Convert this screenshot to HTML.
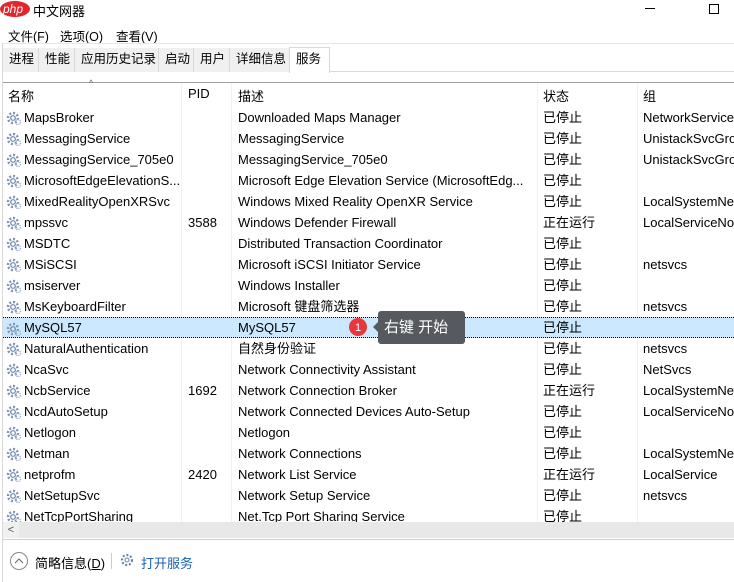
<!DOCTYPE html>
<html><head><meta charset="utf-8"><style>
*{margin:0;padding:0;box-sizing:border-box}
body{width:734px;height:582px;overflow:hidden;background:#fff;font-family:"Liberation Sans","Noto Sans CJK SC",sans-serif;font-size:13px;color:#000;position:relative}
.a{position:absolute;white-space:nowrap}
.tab{position:absolute;top:48px;height:24px;background:#f0f0f0;border-right:1px solid #d9d9d9;line-height:23px;padding-left:6px;font-size:12.5px}
.row{position:absolute;left:3px;width:731px;height:21px;line-height:21px}
.row span{position:absolute;top:0}
.g{left:3px;top:3px;position:absolute}
.vl{position:absolute;top:83px;height:439px;width:1px;background:#eef1f8}
</style></head><body>
<svg class="a" style="left:0;top:0" width="32" height="20"><ellipse cx="15" cy="9" rx="15" ry="8" fill="#e3262b"/><text x="3" y="13" font-size="12" fill="#fff" font-style="italic" font-family="Liberation Sans">php</text></svg>
<div class="a" style="left:33px;top:1px;font-size:13px">中文网器</div>
<div class="a" style="left:645px;top:8px;width:10px;height:1px;background:#000"></div>
<div class="a" style="left:709px;top:4px;width:10px;height:10px;border:1px solid #000"></div>
<div class="a" style="left:8px;top:26px;font-size:12.5px">文件(F)</div>
<div class="a" style="left:60px;top:26px;font-size:12.5px">选项(O)</div>
<div class="a" style="left:116px;top:26px;font-size:12.5px">查看(V)</div>
<div class="a" style="left:2px;top:43px;width:732px;height:1px;background:#e6e6e6"></div>
<div class="a" style="left:2px;top:71px;width:732px;height:1px;background:#d9d9d9"></div>
<div class="a" style="left:2px;top:43px;width:1px;height:539px;background:#d9d9d9"></div>
<div class="tab" style="left:3px;width:36px">进程</div>
<div class="tab" style="left:39px;width:36px">性能</div>
<div class="tab" style="left:75px;width:84px">应用历史记录</div>
<div class="tab" style="left:159px;width:35px">启动</div>
<div class="tab" style="left:194px;width:36px">用户</div>
<div class="tab" style="left:230px;width:60px">详细信息</div>
<div class="tab" style="left:289px;top:47px;height:26px;width:41px;background:#fff;border:1px solid #d9d9d9;border-bottom:none">服务</div>
<div class="a" style="left:3px;top:82px;width:731px;height:1px;background:#a0a0a0"></div>
<div class="a" style="left:89px;top:78px;font-size:9px;color:#666">^</div>
<div class="vl" style="left:181px"></div><div class="vl" style="left:231px"></div><div class="vl" style="left:537px"></div><div class="vl" style="left:637px"></div>
<div class="a" style="left:8px;top:86px">名称</div>
<div class="a" style="left:188px;top:86px">PID</div>
<div class="a" style="left:238px;top:86px">描述</div>
<div class="a" style="left:543px;top:86px">状态</div>
<div class="a" style="left:643px;top:86px">组</div>
<div id="rows"></div>
<div class="a" style="left:3px;top:522px;width:731px;height:16px;background:#e8e8e8"></div>
<div class="a" style="left:3px;top:522px;width:16px;height:16px;background:#f0f0f0;font-size:11px;line-height:16px;text-align:center;color:#555">&lt;</div>
<div class="a" style="left:3px;top:539px;width:731px;height:1px;background:#d0d0d0"></div>
<svg class="a" style="left:9px;top:551px" width="20" height="20"><circle cx="10" cy="10" r="8.5" fill="none" stroke="#888"/><path d="M6 12 L10 8 L14 12" fill="none" stroke="#666"/></svg>
<div class="a" style="left:35px;top:553px">简略信息(<u>D</u>)</div>
<div class="a" style="left:111px;top:553px;width:1px;height:16px;background:#ccc"></div>
<svg class="a" style="left:120px;top:553px" width="16" height="16"><g fill="none" stroke="#6a84a8" stroke-width="2.2" stroke-dasharray="2 1.8"><circle cx="7" cy="7" r="5"/></g><circle cx="7" cy="7" r="2" fill="none" stroke="#6a84a8"/></svg>
<div class="a" style="left:141px;top:553px;color:#1a5fb4">打开服务</div>
<script>
const d=[["MapsBroker","","Downloaded Maps Manager","已停止","NetworkService"],["MessagingService","","MessagingService","已停止","UnistackSvcGrou"],["MessagingService_705e0","","MessagingService_705e0","已停止","UnistackSvcGrou"],["MicrosoftEdgeElevationS...","","Microsoft Edge Elevation Service (MicrosoftEdg...","已停止",""],["MixedRealityOpenXRSvc","","Windows Mixed Reality OpenXR Service","已停止","LocalSystemNet"],["mpssvc","3588","Windows Defender Firewall","正在运行","LocalServiceNo"],["MSDTC","","Distributed Transaction Coordinator","已停止",""],["MSiSCSI","","Microsoft iSCSI Initiator Service","已停止","netsvcs"],["msiserver","","Windows Installer","已停止",""],["MsKeyboardFilter","","Microsoft 键盘筛选器","已停止","netsvcs"],["MySQL57","","MySQL57","已停止",""],["NaturalAuthentication","","自然身份验证","已停止","netsvcs"],["NcaSvc","","Network Connectivity Assistant","已停止","NetSvcs"],["NcbService","1692","Network Connection Broker","正在运行","LocalSystemNet"],["NcdAutoSetup","","Network Connected Devices Auto-Setup","已停止","LocalServiceNo"],["Netlogon","","Netlogon","已停止",""],["Netman","","Network Connections","已停止","LocalSystemNet"],["netprofm","2420","Network List Service","正在运行","LocalService"],["NetSetupSvc","","Network Setup Service","已停止","netsvcs"],["NetTcpPortSharing","","Net.Tcp Port Sharing Service","已停止",""]];
const gear='<svg class="g" width="16" height="16"><circle cx="7" cy="8" r="5" fill="none" stroke="#7d94b3" stroke-width="2.4" stroke-dasharray="2 1.9"/><circle cx="7" cy="8" r="2.3" fill="none" stroke="#6a84a8" stroke-width="1.2"/><circle cx="12" cy="12" r="2.5" fill="none" stroke="#9aaac0" stroke-width="1.3" stroke-dasharray="1.2 1"/></svg>';
let h='';d.forEach((r,i)=>{const t=107+i*21;const sel=i==10;
h+=`<div class="row" style="top:${t}px;${sel?'background:#cce8ff;border-top:1px dotted #000;border-bottom:1px dotted #000;line-height:20px':'line-height:22px'}">${gear}<span style="left:21px">${r[0]}</span><span style="left:185px">${r[1]}</span><span style="left:235px">${r[2]}</span><span style="left:540px">${r[3]}</span><span style="left:640px">${r[4]}</span></div>`;});
document.getElementById('rows').innerHTML=h;
</script>
<svg class="a" style="left:347px;top:317px" width="30" height="20"><circle cx="11" cy="10" r="9" fill="#e8383d"/><text x="11" y="14" text-anchor="middle" fill="#fff" font-size="11" font-family="Liberation Sans">1</text></svg>
<div class="a" style="left:373px;top:322px;width:0;height:0;border:5px solid transparent;border-right-color:#565a5e;border-left:none"></div>
<div class="a" style="left:378px;top:311px;width:87px;height:33px;background:#565a5e;border-radius:3px;color:#fff;font-size:15px;line-height:33px;padding-left:6px">右键 开始</div>
</body></html>
